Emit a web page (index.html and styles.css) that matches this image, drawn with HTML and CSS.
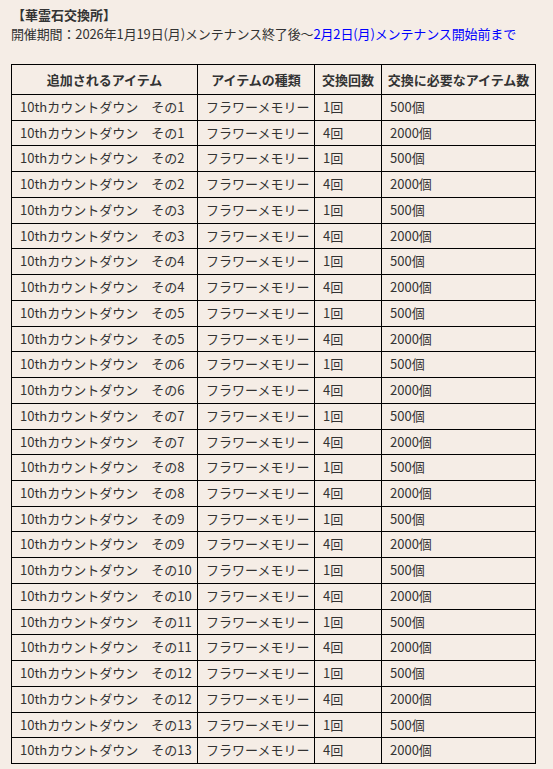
FILE: index.html
```html
<!DOCTYPE html>
<html lang="ja">
<head>
<meta charset="utf-8">
<title>華霊石交換所</title>
<link rel="stylesheet" href="styles.css">
</head>
<body>
<div class="page">
  <div class="title">【華霊石交換所】</div>
  <div class="period">開催期間：2026年1月19日(月)メンテナンス終了後〜<span class="hl">2月2日(月)メンテナンス開始前まで</span></div>
  <table class="items">
    <colgroup>
      <col class="c1"><col class="c2"><col class="c3"><col class="c4">
    </colgroup>
    <thead>
      <tr><th>追加されるアイテム</th><th>アイテムの種類</th><th>交換回数</th><th>交換に必要なアイテム数</th></tr>
    </thead>
    <tbody>
      <tr><td>10thカウントダウン　その1</td><td>フラワーメモリー</td><td>1回</td><td>500個</td></tr>
      <tr><td>10thカウントダウン　その1</td><td>フラワーメモリー</td><td>4回</td><td>2000個</td></tr>
      <tr><td>10thカウントダウン　その2</td><td>フラワーメモリー</td><td>1回</td><td>500個</td></tr>
      <tr><td>10thカウントダウン　その2</td><td>フラワーメモリー</td><td>4回</td><td>2000個</td></tr>
      <tr><td>10thカウントダウン　その3</td><td>フラワーメモリー</td><td>1回</td><td>500個</td></tr>
      <tr><td>10thカウントダウン　その3</td><td>フラワーメモリー</td><td>4回</td><td>2000個</td></tr>
      <tr><td>10thカウントダウン　その4</td><td>フラワーメモリー</td><td>1回</td><td>500個</td></tr>
      <tr><td>10thカウントダウン　その4</td><td>フラワーメモリー</td><td>4回</td><td>2000個</td></tr>
      <tr><td>10thカウントダウン　その5</td><td>フラワーメモリー</td><td>1回</td><td>500個</td></tr>
      <tr><td>10thカウントダウン　その5</td><td>フラワーメモリー</td><td>4回</td><td>2000個</td></tr>
      <tr><td>10thカウントダウン　その6</td><td>フラワーメモリー</td><td>1回</td><td>500個</td></tr>
      <tr><td>10thカウントダウン　その6</td><td>フラワーメモリー</td><td>4回</td><td>2000個</td></tr>
      <tr><td>10thカウントダウン　その7</td><td>フラワーメモリー</td><td>1回</td><td>500個</td></tr>
      <tr><td>10thカウントダウン　その7</td><td>フラワーメモリー</td><td>4回</td><td>2000個</td></tr>
      <tr><td>10thカウントダウン　その8</td><td>フラワーメモリー</td><td>1回</td><td>500個</td></tr>
      <tr><td>10thカウントダウン　その8</td><td>フラワーメモリー</td><td>4回</td><td>2000個</td></tr>
      <tr><td>10thカウントダウン　その9</td><td>フラワーメモリー</td><td>1回</td><td>500個</td></tr>
      <tr><td>10thカウントダウン　その9</td><td>フラワーメモリー</td><td>4回</td><td>2000個</td></tr>
      <tr><td>10thカウントダウン　その10</td><td>フラワーメモリー</td><td>1回</td><td>500個</td></tr>
      <tr><td>10thカウントダウン　その10</td><td>フラワーメモリー</td><td>4回</td><td>2000個</td></tr>
      <tr><td>10thカウントダウン　その11</td><td>フラワーメモリー</td><td>1回</td><td>500個</td></tr>
      <tr><td>10thカウントダウン　その11</td><td>フラワーメモリー</td><td>4回</td><td>2000個</td></tr>
      <tr><td>10thカウントダウン　その12</td><td>フラワーメモリー</td><td>1回</td><td>500個</td></tr>
      <tr><td>10thカウントダウン　その12</td><td>フラワーメモリー</td><td>4回</td><td>2000個</td></tr>
      <tr><td>10thカウントダウン　その13</td><td>フラワーメモリー</td><td>1回</td><td>500個</td></tr>
      <tr><td>10thカウントダウン　その13</td><td>フラワーメモリー</td><td>4回</td><td>2000個</td></tr>
    </tbody>
  </table>
</div>
</body>
</html>
```

FILE: styles.css
```css
html, body {
  margin: 0;
  padding: 0;
  background: #f5ede6;
}
body {
  font-family: "Noto Sans CJK JP", "Noto Sans", sans-serif;
  font-size: 13px;
  color: #333;
}
.page {
  padding: 5px 0 0 11px;
}
.title {
  font-weight: bold;
  line-height: 19px;
  padding-left: 1px;
}
.period {
  line-height: 19px;
  letter-spacing: -0.13px;
}
.hl {
  color: #0000ff;
}
.items {
  margin-top: 21px;
  border-collapse: collapse;
  table-layout: fixed;
  width: 525px;
}
.c1 { width: 186px; }
.c2 { width: 117px; }
.c3 { width: 67px; }
.c4 { width: 154px; }
.items th,
.items td {
  border: 1px solid #000;
  white-space: nowrap;
  overflow: hidden;
}
.items th {
  font-weight: bold;
  text-align: center;
  padding: 6px 2px;
  line-height: 17px;
}
.items td {
  text-align: left;
  padding: 4px 8px;
  line-height: 16.73px;
}
```
